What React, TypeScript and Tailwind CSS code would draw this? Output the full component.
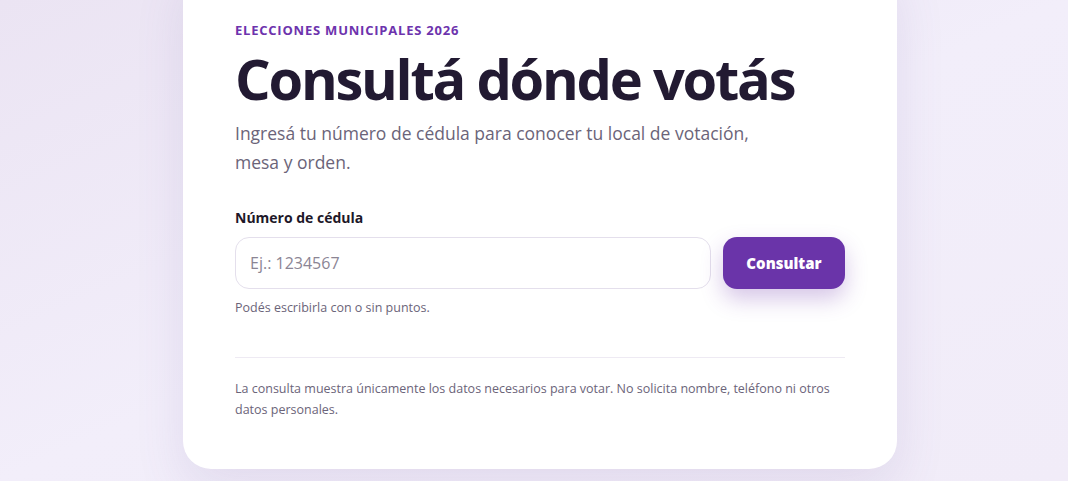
export default function App() {
  return (
    <div
      className="min-h-screen h-[481px] overflow-hidden bg-gradient-to-br from-[#ebe4f3] via-[#f2eefa] to-[#f1ecf8] pl-[12px] flex justify-center"
      style={{ fontFamily: '"Open Sans", "Noto Sans", sans-serif' }}
    >
      <div className="w-[714px] -mt-[40px] h-[509px] bg-white rounded-[28px] shadow-[0_20px_50px_rgba(110,80,160,0.12)] px-[52px] pt-[60px]">
        <p className="text-[13px] font-bold tracking-[0.06em] text-[#6d33ad] leading-[20px]">
          ELECCIONES MUNICIPALES 2026
        </p>
        <h1 className="mt-[4px] whitespace-nowrap text-[56px] font-bold leading-[68px] tracking-[-0.04em] text-[#221a32]">
          Consultá dónde votás
        </h1>
        <p className="mt-[7px] max-w-[530px] text-[17.5px] leading-[29px] text-[#6b6479]">
          Ingresá tu número de cédula para conocer tu local de votación, mesa y orden.
        </p>

        <form className="mt-[31px]" onSubmit={(e) => e.preventDefault()}>
          <label className="block text-[14px] font-bold text-[#1e1829] leading-[20px]">
            Número de cédula
          </label>
          <div className="mt-[9px] flex gap-3">
            <input
              type="text"
              placeholder="Ej.: 1234567"
              className="flex-1 h-[52px] rounded-[14px] border border-[#e4dfec] px-[14px] text-[16px] text-[#221a32] placeholder:text-[#8b8594] outline-none"
            />
            <button
              type="submit"
              className="w-[122px] h-[52px] rounded-[14px] bg-[#6a34a9] text-white text-[15px] font-extrabold shadow-[0_10px_22px_rgba(106,52,169,0.28)]"
            >
              Consultar
            </button>
          </div>
          <p className="mt-[10px] text-[12.5px] leading-[18px] text-[#6b6479]">
            Podés escribirla con o sin puntos.
          </p>
        </form>

        <div className="mt-[40px] h-px bg-[#eeeaf3]" />

        <p className="mt-[20px] text-[12.5px] leading-[21px] text-[#6b6479]">
          La consulta muestra únicamente los datos necesarios para votar. No solicita nombre, teléfono ni otros datos personales.
        </p>
      </div>
    </div>
  );
}
